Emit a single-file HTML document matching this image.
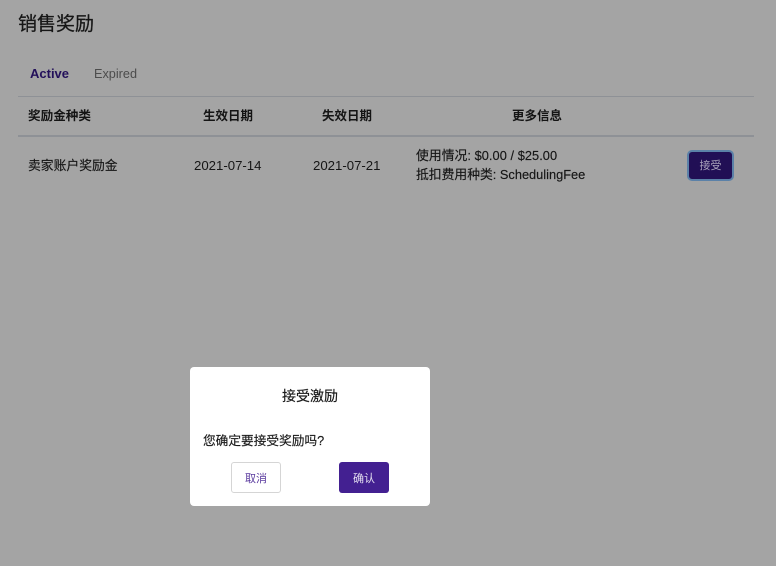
<!DOCTYPE html>
<html>
<head>
<meta charset="utf-8">
<style>
html,body{margin:0;padding:0}
body{position:relative;width:776px;height:566px;overflow:hidden;background:#a4a4a4;font-family:"Liberation Sans","Noto Sans CJK SC",sans-serif;color:#0f0f0f}
.t{position:absolute;white-space:nowrap}
.r{position:absolute}
</style>
</head>
<body>
<div class="t" style="left:18px;top:11px;font-size:19px;line-height:28px;color:#161616;-webkit-text-stroke:0.25px #161616">销售奖励</div>
<div class="t" style="left:30px;top:65px;font-size:13px;line-height:18px;font-weight:bold;color:#23105a">Active</div>
<div class="t" style="left:94px;top:65px;font-size:12.7px;line-height:18px;color:#4c4c4c">Expired</div>
<div class="r" style="left:18px;top:96px;width:736px;height:1px;background:#8e9196"></div>
<div class="t" style="left:28px;top:107px;font-size:12.6px;line-height:18px;font-weight:bold;color:#141414">奖励金种类</div>
<div class="t" style="left:203px;top:107px;font-size:12.5px;line-height:18px;font-weight:bold;color:#141414">生效日期</div>
<div class="t" style="left:322px;top:107px;font-size:12.5px;line-height:18px;font-weight:bold;color:#141414">失效日期</div>
<div class="t" style="left:512px;top:107px;font-size:12.5px;line-height:18px;font-weight:bold;color:#141414">更多信息</div>
<div class="r" style="left:18px;top:135px;width:736px;height:2px;background:#8e9196"></div>
<div class="t" style="left:28px;top:156px;font-size:12.8px;line-height:19px;color:#161616;-webkit-text-stroke:0.15px #161616">卖家账户奖励金</div>
<div class="t" style="left:194px;top:156px;font-size:13.2px;line-height:19px;color:#161616">2021-07-14</div>
<div class="t" style="left:313px;top:156px;font-size:13.2px;line-height:19px;color:#161616">2021-07-21</div>
<div class="t" style="left:416px;top:146px;font-size:12.8px;line-height:19px;color:#161616;letter-spacing:0.05px;-webkit-text-stroke:0.15px #161616">使用情况: $0.00 / $25.00</div>
<div class="t" style="left:416px;top:165px;font-size:12.8px;line-height:19px;color:#161616;-webkit-text-stroke:0.15px #161616">抵扣费用种类: SchedulingFee</div>
<div class="r" style="left:687px;top:150px;width:43px;height:27px;border:2px solid #5b81a8;border-radius:5px;background:#210f55"></div>
<div class="t" style="left:687px;top:151px;width:47px;text-align:center;font-size:11px;line-height:31px;color:#a9a3bb">接受</div>

<div class="r" style="left:190px;top:367px;width:240px;height:139px;background:#fff;border-radius:4px"></div>
<div class="t" style="left:190px;top:386px;width:240px;text-align:center;font-size:14px;line-height:20px;color:#1a1a1a;-webkit-text-stroke:0.2px #1a1a1a">接受激励</div>
<div class="t" style="left:203px;top:432px;font-size:12.7px;line-height:19px;color:#1a1a1a;-webkit-text-stroke:0.15px #1a1a1a">您确定要接受奖励吗?</div>
<div class="r" style="left:231px;top:462px;width:48px;height:29px;border:1px solid #d5d5d5;border-radius:3px;background:#fff"></div>
<div class="t" style="left:231px;top:464px;width:50px;text-align:center;font-size:11px;line-height:31px;color:#5a3a9e">取消</div>
<div class="r" style="left:339px;top:462px;width:50px;height:31px;border-radius:3px;background:#432091"></div>
<div class="t" style="left:339px;top:464px;width:50px;text-align:center;font-size:11px;line-height:31px;color:#e4dff0">确认</div>
</body>
</html>
